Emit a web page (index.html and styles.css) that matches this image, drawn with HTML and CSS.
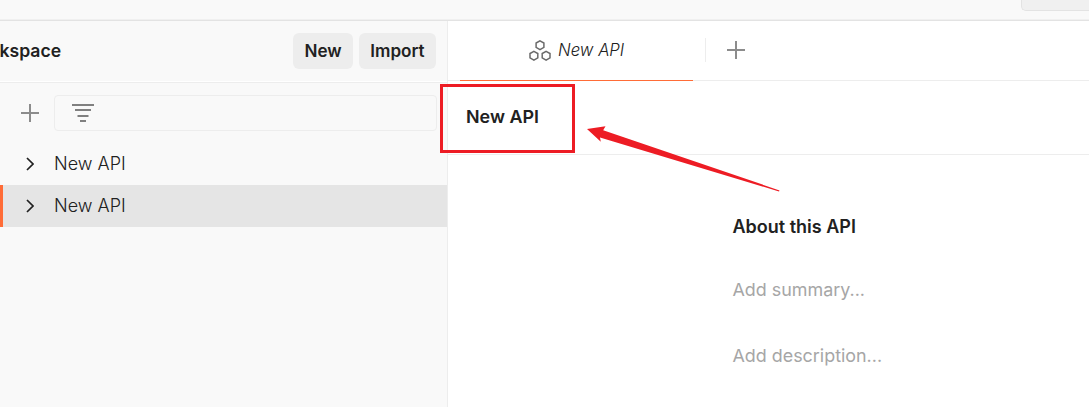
FILE: index.html
```html
<!DOCTYPE html>
<html lang="en">
<head>
<meta charset="utf-8">
<title>New API</title>
<link rel="stylesheet" href="styles.css">
</head>
<body>
<div class="app">
  <header class="topbar"><div class="topbar-field"></div></header>
  <div class="body">
    <aside class="sidebar">
      <div class="workspace">
        <span class="workspace-name">kspace</span>
        <button class="btn btn-new">New</button>
        <button class="btn btn-import">Import</button>
      </div>
      <div class="filter-row">
        <svg class="plus" width="18" height="18" viewBox="0 0 18 18"><path d="M9 0v18M0 9h18"/></svg>
        <div class="filter">
          <svg width="22" height="18" viewBox="0 0 22 18"><path d="M0 1h22M3 6h16M5.500 12h11M8 17h6"/></svg>
        </div>
      </div>
      <ul class="tree">
        <li class="item"><svg class="chevron" width="8" height="14" viewBox="0 0 8 14"><path d="M1 1l6 6-6 6"/></svg><span>New API</span></li>
        <li class="item selected"><svg class="chevron" width="8" height="14" viewBox="0 0 8 14"><path d="M1 1l6 6-6 6"/></svg><span>New API</span></li>
      </ul>
    </aside>
    <main class="main">
      <div class="tabs">
        <div class="tab">
          <svg class="api-icon" width="22" height="21" viewBox="0 0 22 21"><path d="M11 .8l3.900 2.200v4.400L11 9.600 7.100 7.400V3zM4.900 11.300l3.900 2.200v4.400l-3.900 2.200L1 17.900v-4.400zM17.100 11.300l3.900 2.200v4.400l-3.900 2.200-3.900-2.200v-4.400z"/></svg>
          <span>New API</span>
        </div>
        <div class="tab-divider"></div>
        <svg class="plus" width="18" height="18" viewBox="0 0 18 18"><path d="M9 0v18M0 9h18"/></svg>
      </div>
      <div class="title"><span>New API</span></div>
      <section class="about">
        <h2>About this API</h2>
        <p>Add summary...</p>
        <p>Add description...</p>
      </section>
    </main>
  </div>
  <div class="highlight"></div>
  <svg class="arrow" width="200" height="70" viewBox="0 0 200 70"><path d="M2 4L20.500 1.200 18.200 5.300 194.500 65.400 194 66.400 15 12.500 15.800 16.800z"/></svg>
</div>
</body>
</html>
```
FILE: styles.css
```css
* { box-sizing: border-box; }
body { margin: 0; font: 18px/24px Inter, "Liberation Sans", sans-serif; color: #212121; }
.app { position: relative; width: 1089px; height: 407px; display: flex; flex-direction: column; overflow: hidden; background: #fff; }
svg { display: block; flex: none; fill: none; }
.topbar { height: 21px; flex: none; display: flex; justify-content: flex-end; background: #f9f9f9; border-bottom: 1px solid #e3e3e3; box-shadow: inset 0 -1px #f0f0f0; }
.topbar-field { width: 68px; height: 11px; background: #f0f0f0; border: solid #e3e3e3; border-width: 0 0 1px 1px; border-radius: 0 0 0 5px; }
.body { flex: 1; display: flex; }
.sidebar { width: 448px; background: #f9f9f9; border-right: 1px solid #ededed; }
.workspace { height: 62px; padding: 0 11px 1px 0; display: flex; align-items: center; border-bottom: 1px solid #ededed; box-shadow: inset 0 -1px #fff; }
.workspace-name { flex: 1; font-weight: 560; font-size: 17.600px; margin-left: -.5px; }
.btn { height: 36px; border: 0; border-radius: 6px; background: #ededed; color: #212121; font: 560 17.100px/24px Inter, sans-serif; padding: 0; }
.btn-new { width: 60px; }
.btn-import { width: 77px; margin-left: 6px; }
.filter-row { display: flex; align-items: center; padding: 12px 10px 0 21px; }
.plus { stroke: #8c8c8c; stroke-width: 2; }
.filter { width: 383px; height: 36px; margin-left: 15px; flex: none; padding-left: 17px; display: flex; align-items: center; border: 1px solid #ededed; border-radius: 4px; }
.filter svg { stroke: #808080; stroke-width: 2; }
.tree { list-style: none; margin: 12px 0 0; padding: 0; }
.item { height: 42px; display: flex; align-items: center; padding-left: 26px; font-weight: 330; }
.item span { margin-left: 20px; }
.selected { background: #e5e5e5; border-left: 3px solid #ff6c37; padding-left: 23px; }
.chevron { stroke: #212121; stroke-width: 1.700; }
.main { flex: 1; }
.tabs { height: 60px; display: flex; align-items: center; padding-left: 12px; border-bottom: 1px solid #ededed; }
.tab { width: 233px; height: 60px; flex: none; margin-bottom: -1px; display: flex; align-items: center; padding-left: 69px; border-bottom: 1px solid #ff6c37; font-size: 16.700px; font-weight: 350; font-style: italic; }
.tab span { margin-top: -2px; }
.api-icon { stroke: #6b6b6b; stroke-width: 1.500; margin: -1px 7px 0 0; }
.tabs > .plus { margin-top: -1px; }
.tab-divider { width: 1px; height: 24px; background: #ededed; margin: -2px 21px 0 12px; }
.title { height: 74px; padding: 0 0 2px 18px; display: flex; align-items: center; border-bottom: 1px solid #ededed; font-size: 17.900px; font-weight: 560; }
.about { padding: 60px 0 0 285px; }
.about h2 { font-size: 18px; line-height: 24px; font-weight: 560; margin: 0 0 39px -.5px; }
.about p { margin: 0 0 42px -.5px; color: #a6a6a6; font-size: 17.900px; }
.highlight { position: absolute; left: 440px; top: 84px; width: 135px; height: 69px; border: 3px solid #ed1c24; }
.arrow { position: absolute; left: 585px; top: 125px; fill: #ed1c24; }
```
